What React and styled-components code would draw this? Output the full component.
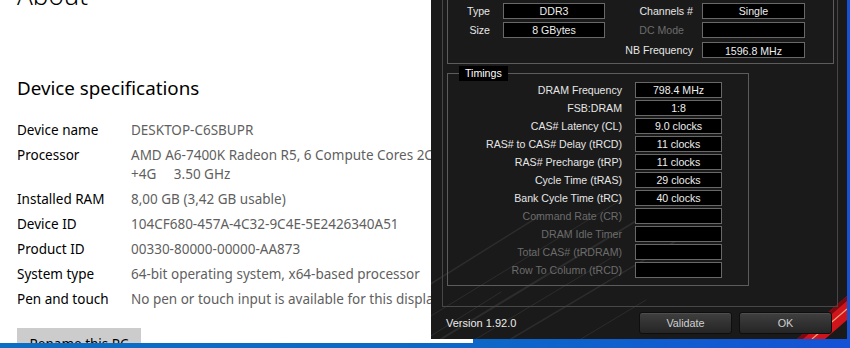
import React from 'react';
import styled, { createGlobalStyle } from 'styled-components';

const GlobalStyle = createGlobalStyle`
  html, body { margin: 0; padding: 0; }
  body { width: 850px; height: 348px; overflow: hidden; }
  *, *::before, *::after { box-sizing: border-box; }
`;

const Desktop = styled.div`
  position: relative;
  width: 850px;
  height: 348px;
  overflow: hidden;
  background: linear-gradient(90deg, #0b6ec4 0%, #0c68c8 55%, #1552d6 100%);
`;

/* ---------- Settings window ---------- */
const SettingsWindow = styled.div`
  position: absolute;
  left: 0;
  top: 0;
  width: 473px;
  height: 343px;
  background: #ffffff;
  overflow: hidden;
  padding-left: 17px;
  display: flex;
  flex-direction: column;
  font-family: "Noto Sans", "Open Sans", sans-serif;
  color: #000;
`;

const PageTitle = styled.h1`
  margin: -22px 0 0;
  flex-shrink: 0;
  font-size: 26px;
  font-weight: 300;
  line-height: 34px;
  white-space: nowrap;
`;

const SectionTitle = styled.h2`
  margin: 62.7px 0 0;
  flex-shrink: 0;
  font-size: 18.8px;
  font-weight: 400;
  line-height: 26px;
  white-space: nowrap;
`;

const SpecList = styled.dl`
  margin: 20.3px 0 0;
  flex-shrink: 0;
  display: flex;
  flex-direction: column;
  gap: 6px;
`;

const SpecRow = styled.div`
  display: grid;
  grid-template-columns: 114px auto;
  font-size: 13.5px;
  line-height: 19px;
`;

const SpecLabel = styled.dt`
  margin: 0;
  color: #000;
  white-space: nowrap;
`;

const SpecValue = styled.dd`
  margin: 0;
  color: #5f5f5f;
  white-space: pre;
`;

const RenameButton = styled.button`
  margin-top: 19px;
  flex-shrink: 0;
  align-self: flex-start;
  width: 124px;
  height: 32px;
  padding: 0;
  border: none;
  background: #cccccc;
  font-family: inherit;
  font-size: 13.5px;
  color: #000;
`;

/* ---------- CPU-Z window ---------- */
const CpuzWindow = styled.div`
  position: absolute;
  left: 431px;
  top: 0;
  width: 416px;
  height: 339px;
  background: #1a1a1a;
  overflow: hidden;
  font-family: "Liberation Sans", Arial, sans-serif;
  font-size: 10.6px;
  color: #e6e6e6;
`;

const Decor = styled.svg`
  position: absolute;
  left: 0;
  top: 0;
`;

const CpuzBody = styled.div`
  position: relative;
  display: flex;
  flex-direction: column;
  height: 100%;
`;

const TabFrame = styled.div`
  margin: -20px 0 0 11px;
  width: 396px;
  height: 327px;
  flex-shrink: 0;
  border: 1px solid #474747;
  padding: 0 3px 0 4px;
  display: flex;
  flex-direction: column;
`;

const GeneralBox = styled.div`
  height: 83px;
  flex-shrink: 0;
  border: 1px solid #5c5c5c;
  padding-top: 21px;
  display: grid;
  grid-template-columns: 55px 102px 97px 103px;
  grid-template-rows: 19px 20px 16px;
  align-items: start;
`;

const FieldLabel = styled.span`
  height: 16px;
  line-height: 16px;
  text-align: right;
  padding-right: ${p => p.$pr || 13}px;
  white-space: nowrap;
  color: ${p => (p.$dim ? '#6c6c6c' : '#e6e6e6')};
`;

const ValueBox = styled.span`
  display: block;
  height: 16px;
  border: 1px solid #686868;
  background: #000;
  text-align: center;
  line-height: ${p => (p.$low ? 17 : 14)}px;
  white-space: nowrap;
  overflow: hidden;
  color: #eeeeee;
`;

const Empty = styled.span``;

const TimingsSet = styled.fieldset`
  margin: 2px 0 0;
  flex-shrink: 0;
  width: 302px;
  height: 220px;
  border: 1px solid #5c5c5c;
  padding: 1px 0 0;
  min-inline-size: 0;
`;

const TimingsLegend = styled.legend`
  margin-left: 11px;
  padding: 0 6px;
  height: 15px;
  line-height: 15px;
  background: #000;
  color: #ffffff;
`;

const TimingsGrid = styled.div`
  display: grid;
  grid-template-columns: 187px 87px;
  grid-auto-rows: 16px;
  row-gap: 2px;
`;

const Footer = styled.div`
  margin-top: 5px;
  height: 22px;
  flex-shrink: 0;
  padding: 0 15px;
  display: flex;
  align-items: center;
`;

const Version = styled.span`
  font-size: 11px;
  color: #ececec;
`;

const Buttons = styled.div`
  margin-left: auto;
  display: flex;
  gap: 7px;
`;

const DarkButton = styled.button`
  width: 93px;
  height: 22px;
  padding: 0;
  border: 1px solid #0e0e0e;
  border-radius: 3px;
  background: linear-gradient(180deg, #404040 0%, #333 45%, #252525 100%);
  box-shadow: inset 0 1px 0 rgba(255, 255, 255, 0.08);
  font-family: "Liberation Sans", Arial, sans-serif;
  font-size: 10.8px;
  color: #cfcfcf;
`;

const timings = [
  ['DRAM Frequency', '798.4 MHz'],
  ['FSB:DRAM', '1:8'],
  ['CAS# Latency (CL)', '9.0 clocks'],
  ['RAS# to CAS# Delay (tRCD)', '11 clocks'],
  ['RAS# Precharge (tRP)', '11 clocks'],
  ['Cycle Time (tRAS)', '29 clocks'],
  ['Bank Cycle Time (tRC)', '40 clocks'],
  ['Command Rate (CR)', '', true],
  ['DRAM Idle Timer', '', true],
  ['Total CAS# (tRDRAM)', '', true],
  ['Row To Column (tRCD)', '', true],
];

const specs = [
  ['Device name', 'DESKTOP-C6SBUPR'],
  ['Processor', 'AMD A6-7400K Radeon R5, 6 Compute Cores 2C\n+4G     3.50 GHz'],
  ['Installed RAM', '8,00 GB (3,42 GB usable)'],
  ['Device ID', '104CF680-457A-4C32-9C4E-5E2426340A51'],
  ['Product ID', '00330-80000-00000-AA873'],
  ['System type', '64-bit operating system, x64-based processor'],
  ['Pen and touch', 'No pen or touch input is available for this display'],
];

export default function App() {
  return (
    <>
      <GlobalStyle />
      <Desktop>
        <SettingsWindow>
          <PageTitle>About</PageTitle>
          <SectionTitle>Device specifications</SectionTitle>
          <SpecList>
            {specs.map(([k, v]) => (
              <SpecRow key={k}>
                <SpecLabel>{k}</SpecLabel>
                <SpecValue>{v}</SpecValue>
              </SpecRow>
            ))}
          </SpecList>
          <RenameButton>Rename this PC</RenameButton>
        </SettingsWindow>

        <CpuzWindow>
          <Decor width="416" height="339" viewBox="0 0 416 339">
            <g stroke="#2c2c2c" strokeLinecap="round" fill="none">
              <line x1="-10" y1="290" x2="110" y2="215" strokeWidth="1.5" />
              <line x1="-10" y1="322" x2="190" y2="200" strokeWidth="1" />
              <line x1="10" y1="339" x2="215" y2="215" strokeWidth="2" />
              <line x1="45" y1="339" x2="180" y2="258" strokeWidth="1" />
              <line x1="80" y1="339" x2="250" y2="238" strokeWidth="1.5" />
              <line x1="-5" y1="339" x2="70" y2="292" strokeWidth="1" />
              <line x1="150" y1="339" x2="215" y2="300" strokeWidth="1" />
            </g>
            <polygon points="366,339 394,339 416,320 416,296" fill="#d0141c" />
            <polygon points="366,339 372,339 416,301 416,296" fill="#7a0a0e" />
            <line x1="381" y1="339" x2="416" y2="309" stroke="#f2a27a" strokeWidth="1.2" />
          </Decor>
          <CpuzBody>
            <TabFrame>
              <GeneralBox>
                <FieldLabel>Type</FieldLabel>
                <ValueBox>DDR3</ValueBox>
                <FieldLabel $pr={9}>Channels #</FieldLabel>
                <ValueBox>Single</ValueBox>

                <FieldLabel>Size</FieldLabel>
                <ValueBox>8 GBytes</ValueBox>
                <FieldLabel $pr={18} $dim>DC Mode</FieldLabel>
                <ValueBox />

                <Empty />
                <Empty />
                <FieldLabel $pr={9}>NB Frequency</FieldLabel>
                <ValueBox $low>1596.8 MHz</ValueBox>
              </GeneralBox>

              <TimingsSet>
                <TimingsLegend>Timings</TimingsLegend>
                <TimingsGrid>
                  {timings.map(([k, v, dim]) => (
                    <React.Fragment key={k}>
                      <FieldLabel $dim={dim}>{k}</FieldLabel>
                      <ValueBox>{v}</ValueBox>
                    </React.Fragment>
                  ))}
                </TimingsGrid>
              </TimingsSet>
            </TabFrame>

            <Footer>
              <Version>Version 1.92.0</Version>
              <Buttons>
                <DarkButton>Validate</DarkButton>
                <DarkButton>OK</DarkButton>
              </Buttons>
            </Footer>
          </CpuzBody>
        </CpuzWindow>
      </Desktop>
    </>
  );
}
